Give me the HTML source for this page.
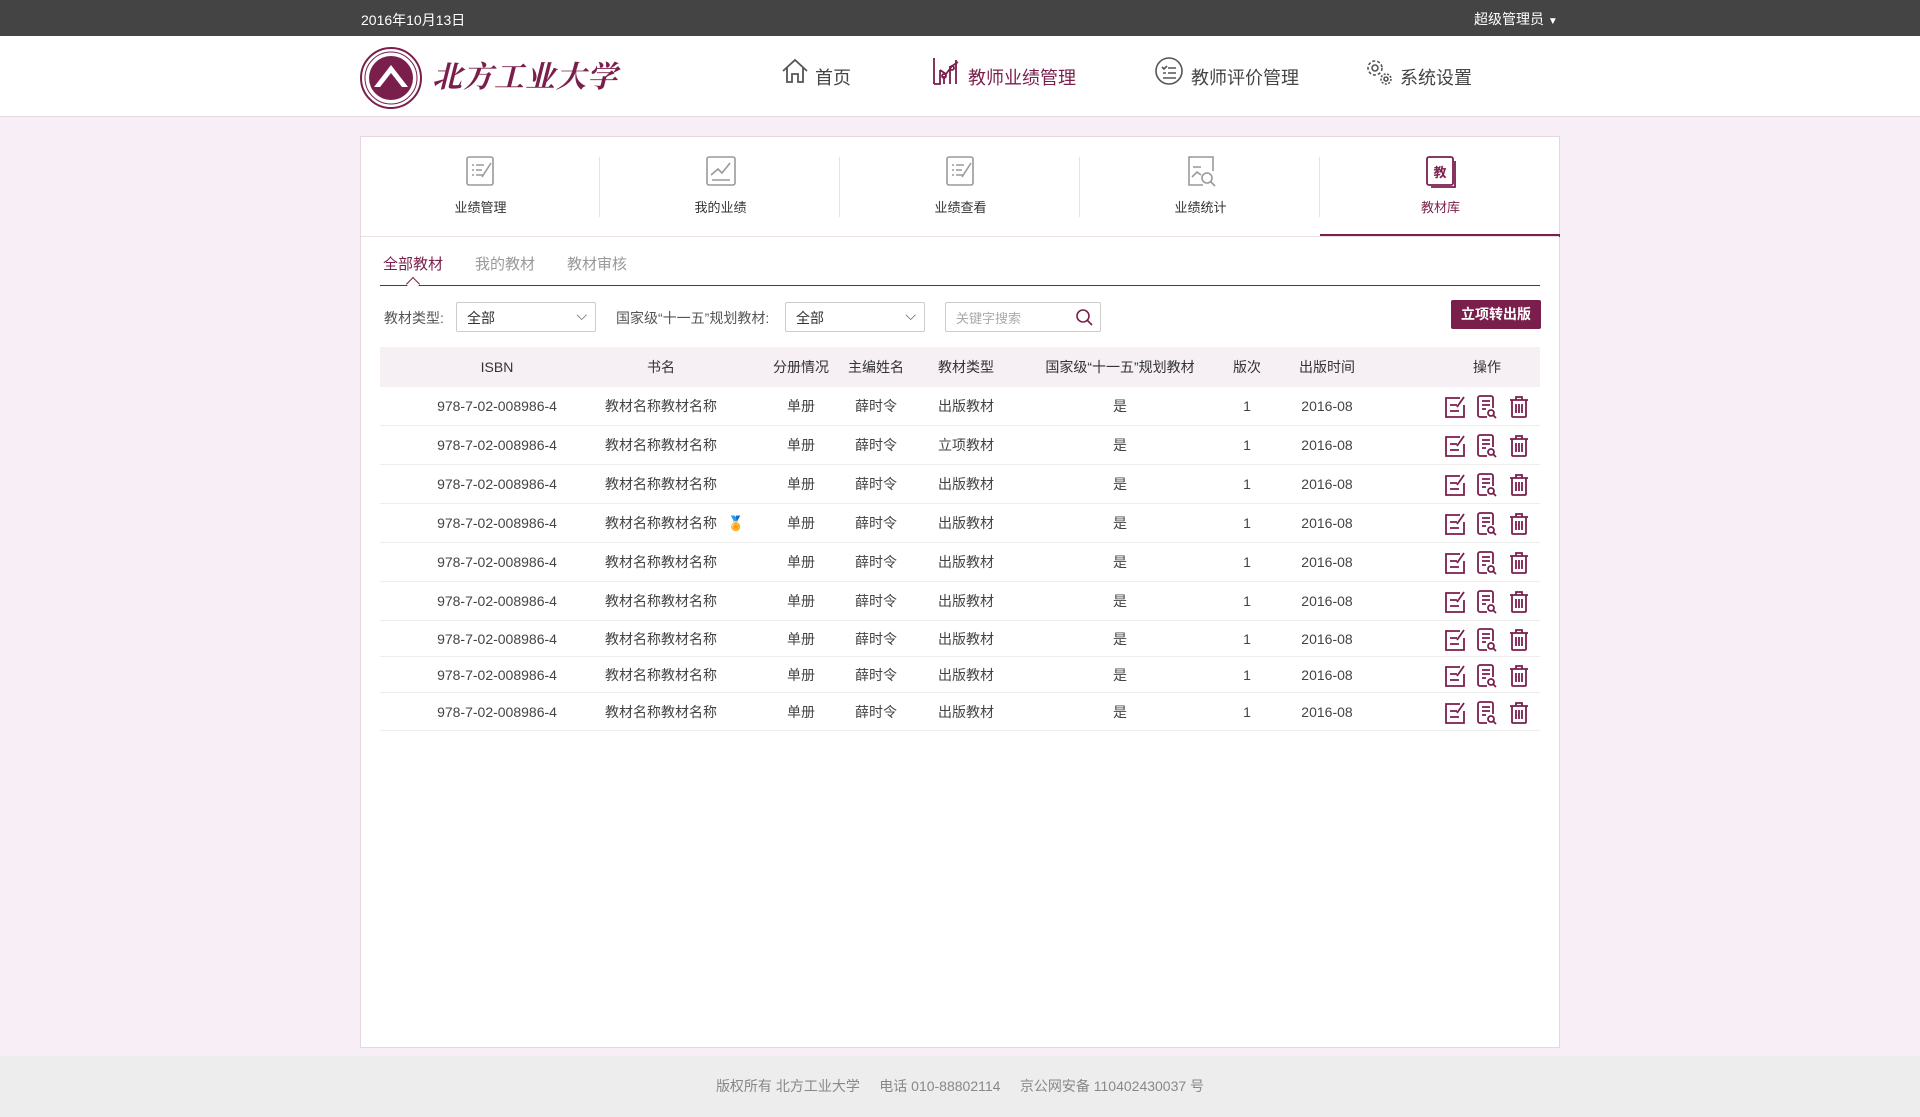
<!DOCTYPE html>
<html><head><meta charset="utf-8"><style>
*{margin:0;padding:0;box-sizing:border-box}
body{width:1920px;height:1117px;background:#f7eff5;font-family:"Liberation Sans","Noto Sans CJK SC",sans-serif;color:#333;position:relative;overflow:hidden;font-size:14px}
.a{position:absolute}
.top{left:0;top:0;width:1920px;height:36px;background:#444;color:#fff;font-size:14px}
.hdr{left:0;top:36px;width:1920px;height:81px;background:#fff;border-bottom:1px solid #e8d9e3}
.nav{font-size:18px;color:#444;top:64px}
.box{left:360px;top:136px;width:1200px;height:912px;background:#fff;border:1px solid #e6d6e0}
.tab{top:0;width:239px;height:100px;text-align:center;font-size:13px;color:#333}
.tab .t{position:absolute;top:60px;width:100%}
.tab svg{position:absolute;top:18px;left:104px}
.sep{top:20px;width:1px;height:60px;background:#e3e3e3}
.sel{height:30px;border:1px solid #ccc;border-radius:2px;font-size:14px;padding:5px 10px;color:#333;background:#fff}
.row{position:absolute;left:19px;width:1160px;border-bottom:1px solid #eee;font-size:14px;color:#444}
.row span{position:absolute;top:0;transform:translateX(-50%);white-space:nowrap}
.row span *{vertical-align:middle}
.hd{background:#f6eff4;color:#333;border:none}
.foot{left:0;top:1056px;width:1920px;height:61px;background:#ededed;color:#888;font-size:14px;text-align:center;line-height:61px}
</style></head><body>
<div class="a top"><span class="a" style="left:361px;top:10px">2016年10月13日</span><span class="a" style="left:1474px;top:9px">超级管理员 <span style="font-size:10px">▼</span></span></div>
<div class="a hdr">
<svg class="a" style="left:360px;top:11px" width="62" height="62" viewBox="0 0 62 62"><circle cx="31" cy="31" r="30" fill="#fff" stroke="#7a1f4c" stroke-width="2"/><circle cx="31" cy="31" r="22" fill="#7a1f4c"/><path d="M14 40 L31 18 L48 40 Z" fill="#fff"/><path d="M20 40 L31 26 L42 40Z" fill="#7a1f4c"/><circle cx="31" cy="31" r="26" fill="none" stroke="#7a1f4c" stroke-width="1"/></svg>
<span class="a" style="left:432px;top:16px;font-family:'Noto Serif CJK SC',serif;font-size:30px;font-weight:bold;color:#7a1f4c;font-style:italic;letter-spacing:1px">北方工业大学</span>
<svg class="a" style="left:781px;top:22px" width="28" height="26" viewBox="0 0 28 26" fill="none" stroke="#555" stroke-width="1.8"><path d="M2 13 L14 2 L26 13 M6 10 V24 H11 V16 H17 V24 H22 V10"/></svg>
<span class="a nav" style="left:815px;top:28px">首页</span>
<svg class="a" style="left:932px;top:20px" width="30" height="30" viewBox="0 0 30 30" fill="none" stroke="#7a1f4c" stroke-width="1.8"><path d="M2 2V28M2 28H8V14M12 28V20M18 28V10M24 28V4M8 14L14 18L20 10L26 6"/><circle cx="12" cy="20" r="2"/><circle cx="20" cy="12" r="2"/></svg>
<span class="a nav" style="left:968px;top:28px;color:#7a1f4c">教师业绩管理</span>
<svg class="a" style="left:1154px;top:20px" width="30" height="30" viewBox="0 0 30 30" fill="none" stroke="#555" stroke-width="1.6"><circle cx="15" cy="15" r="13"/><path d="M8 11l2 2 3-3M9 17h3M14 12h8M14 17h8M9 22h13"/></svg>
<span class="a nav" style="left:1191px;top:28px">教师评价管理</span>
<svg class="a" style="left:1365px;top:22px" width="28" height="28" viewBox="0 0 28 28" fill="none" stroke="#555" stroke-width="1.6"><circle cx="10" cy="10" r="7" stroke-dasharray="3 2"/><circle cx="10" cy="10" r="3"/><circle cx="21" cy="21" r="5" stroke-dasharray="2 1.5"/><circle cx="21" cy="21" r="2"/></svg>
<span class="a nav" style="left:1400px;top:28px">系统设置</span>
</div>
<div class="a box" id="box">
<div class="a tab" style="left:0"><svg width="32" height="32" viewBox="0 0 32 32" fill="none" stroke="#999" stroke-width="1.6"><rect x="2" y="2" width="26" height="28" rx="2"/><path d="M7 10h2M7 15h2M7 20h2M11 10h8M11 15h6M11 20h8M17 22l9-14"/></svg><div class="t">业绩管理</div></div>
<div class="a sep" style="left:238px"></div>
<div class="a tab" style="left:240px"><svg width="32" height="32" viewBox="0 0 32 32" fill="none" stroke="#999" stroke-width="1.6"><rect x="2" y="2" width="28" height="28" rx="2"/><path d="M6 20l7-6 4 4 8-10M7 25h18"/></svg><div class="t">我的业绩</div></div>
<div class="a sep" style="left:478px"></div>
<div class="a tab" style="left:480px"><svg width="32" height="32" viewBox="0 0 32 32" fill="none" stroke="#999" stroke-width="1.6"><rect x="2" y="2" width="26" height="28" rx="2"/><path d="M7 10h2M7 15h2M7 20h2M11 10h8M11 15h6M11 20h8M17 22l9-14"/></svg><div class="t">业绩查看</div></div>
<div class="a sep" style="left:718px"></div>
<div class="a tab" style="left:720px"><svg width="32" height="32" viewBox="0 0 32 32" fill="none" stroke="#999" stroke-width="1.6"><path d="M18 30H4V2h24v14"/><path d="M7 22l5-5 4 3M8 12h8"/><circle cx="22" cy="23" r="5"/><path d="M26 27l4 4"/></svg><div class="t">业绩统计</div></div>
<div class="a sep" style="left:958px"></div>
<div class="a tab" style="left:960px;color:#7a1f4c"><svg width="32" height="34" viewBox="0 0 32 34" fill="none" stroke="#7a1f4c" stroke-width="1.8"><rect x="2" y="2" width="26" height="28" rx="2"/><path d="M6 32h24V6"/><text x="15" y="22" font-size="13" text-anchor="middle" fill="#7a1f4c" stroke="none" font-family="Noto Sans CJK SC" font-weight="bold">教</text></svg><div class="t">教材库</div></div>
<div class="a" style="left:959px;top:97px;width:240px;height:3px;background:#7a1f4c"></div>
<div class="a" style="left:0;top:99px;width:1198px;height:1px;background:#e8e0e5"></div>
<span class="a" style="left:22px;top:116px;font-size:15px;color:#7a1f4c">全部教材</span>
<span class="a" style="left:114px;top:116px;font-size:15px;color:#999">我的教材</span>
<span class="a" style="left:206px;top:116px;font-size:15px;color:#999">教材审核</span>
<div class="a" style="left:19px;top:148px;width:1160px;height:1px;background:#7a1f4c"></div>
<div class="a" style="left:47px;top:142px;width:10px;height:10px;border-left:1px solid #7a1f4c;border-top:1px solid #7a1f4c;background:#fff;transform:rotate(45deg)"></div>
<span class="a" style="left:23px;top:171px;color:#555;font-size:14px">教材类型:</span>
<div class="a sel" style="left:95px;top:165px;width:140px">全部<span style="position:absolute;right:8px;top:4px;color:#555">⌵</span></div>
<span class="a" style="left:255px;top:171px;color:#555;font-size:14px">国家级“十一五”规划教材:</span>
<div class="a sel" style="left:424px;top:165px;width:140px">全部<span style="position:absolute;right:8px;top:4px;color:#555">⌵</span></div>
<div class="a sel" style="left:584px;top:165px;width:156px;color:#aaa;font-size:13px">关键字搜索<svg style="position:absolute;right:7px;top:5px" width="18" height="18" viewBox="0 0 18 18" fill="none" stroke="#7a1f4c" stroke-width="1.6"><circle cx="8" cy="8" r="6"/><path d="M12 12l5 5"/></svg></div>
<div class="a" style="left:1090px;top:163px;width:90px;height:29px;background:#7a1f4c;color:#fff;border-radius:2px;text-align:center;line-height:29px;font-size:14px;font-weight:bold">立项转出版</div>
</div>
<div class="a foot">版权所有 北方工业大学 &nbsp;&nbsp;&nbsp; 电话 010-88802114 &nbsp;&nbsp;&nbsp; 京公网安备 110402430037 号</div>
<script>
var box=document.getElementById('box');
var cx=[497,661,801,876,966,1120,1247,1327,1487].map(function(v){return v-361-19;});
function row(top,h,cells,cls){var d=document.createElement('div');d.className='row'+(cls?' '+cls:'');d.style.top=top+'px';d.style.height=h+'px';
var s='';for(var i=0;i<cells.length;i++){s+='<span style="left:'+cx[i]+'px;height:'+h+'px;line-height:'+h+'px">'+cells[i]+'</span>';}d.innerHTML=s;box.appendChild(d);}
row(210,40,['ISBN','书名','分册情况','主编姓名','教材类型','国家级“十一五”规划教材','版次','出版时间','操作'],'hd');
var ic='<svg width="24" height="24" viewBox="0 0 24 24" fill="none" stroke="#7a1f4c" stroke-width="1.8" style="margin:0 4px"><path d="M17 3H3v19h18V10M7 10h7M7 16h9M14 12l7-10"/></svg><svg width="24" height="24" viewBox="0 0 24 24" fill="none" stroke="#7a1f4c" stroke-width="1.8" style="margin:0 4px"><path d="M12 22H5a2 2 0 01-2-2V3a2 2 0 012-2h11a2 2 0 012 2v10M7 6h8M7 10h8M7 14h4"/><circle cx="16" cy="18" r="3"/><path d="M18 20l3 3"/></svg><svg width="24" height="24" viewBox="0 0 24 24" fill="none" stroke="#7a1f4c" stroke-width="1.8" style="margin:0 4px"><path d="M3 5h18M9 5V2h6v3M5 5v16a1 1 0 001 1h12a1 1 0 001-1V5M9 9v9M12 9v9M15 9v9"/></svg>';
var ty=['出版教材','立项教材','出版教材','出版教材','出版教材','出版教材','出版教材','出版教材','出版教材'];
var tops=[250,289,328,367,406,445,484,520,556,594];
for(var i=0;i<9;i++){row(tops[i],tops[i+1]-tops[i],['978-7-02-008986-4','教材名称教材名称'+(i==3?'<b style="position:absolute;left:122px;top:0;color:#e8a020">🏅</b>':''),'单册','薛时令',ty[i],'是','1','2016-08',ic]);}
</script>
</body></html>
